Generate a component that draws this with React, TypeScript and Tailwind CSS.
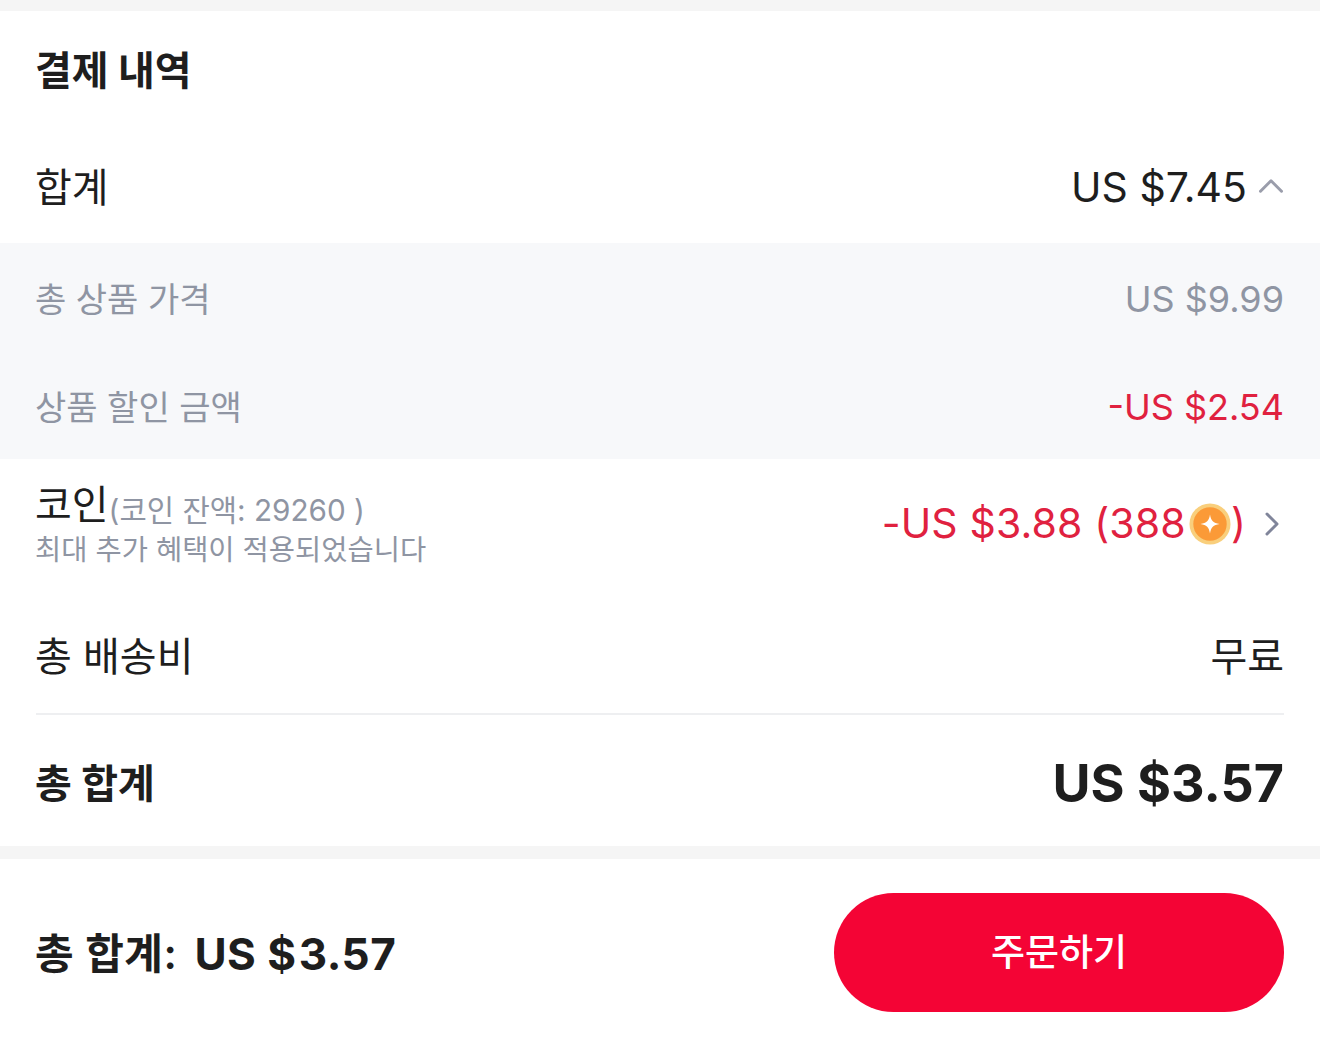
import { ChevronRight, ChevronUp } from "lucide-react";

const font = "font-['Inter','Noto_Sans_CJK_KR',sans-serif]";

function Coin() {
  return (
    <svg width="42" height="42" viewBox="0 0 44 44" className="ml-[3px] shrink-0">
      <circle cx="22" cy="22" r="21.500" fill="#f9cf7c" />
      <circle cx="22" cy="22" r="17.500" fill="#fb9a37" />
      <path d="M22 12c1 6.500 3.500 9 10 10-6.500 1-9 3.500-10 10-1-6.500-3.500-9-10-10 6.500-1 9-3.500 10-10z" fill="#fff" />
    </svg>
  );
}

function DetailRow({ label, value, red }: { label: string; value: string; red?: boolean }) {
  return (
    <div className="flex h-[108px] items-center justify-between px-9 pt-[4px] text-[36px] text-[#8f95a3]">
      <span className="-ml-px text-[34px]">{label}</span>
      <span className={red ? "text-[#e0213f]" : ""}>{value}</span>
    </div>
  );
}

export default function App() {
  return (
    <main className={`${font} flex h-[1049px] w-full flex-col overflow-hidden bg-[#f5f5f5] pt-[11px] text-[#1e1e1e]`}>
      <section className="h-[835px] bg-white">
        <h2 className="flex h-[118px] items-center px-9 pt-[2px] text-[40px] font-bold">
          <span className="-ml-px">결제 내역</span>
        </h2>

        <div className="flex h-[114px] items-center justify-between px-9 pt-[3px] text-[40px]">
          <span className="-ml-px">합계</span>
          <span className="flex items-center gap-[3px] text-[41px]">
            US $7.45
            <ChevronUp size={42} strokeWidth={1.7} className="-mr-[8px] -mt-[4px] text-[#9a9dab]" />
          </span>
        </div>

        <div className="bg-[#f7f8fa]">
          <DetailRow label="총 상품 가격" value="US $9.99" />
          <DetailRow label="상품 할인 금액" value="-US $2.54" red />
        </div>

        <div className="flex h-[132px] items-center justify-between px-9">
          <div className="-ml-px">
            <div className="flex h-[46px] items-center">
              <span className="text-[40px]">코인</span>
              <span className="mt-[10px] text-[29.700px] text-[#8f95a3]">(코인 잔액: 29260 )</span>
            </div>
            <div className="mt-[4px] text-[28.500px] leading-[36px] text-[#8f95a3]">최대 추가 혜택이 적용되었습니다</div>
          </div>
          <div className="-mt-[3px] flex items-center text-[41px] tracking-[0.15px] text-[#e0213f]">
            -US $3.88 (388
            <Coin />)
            <ChevronRight size={40} strokeWidth={1.8} className="-mr-[8px] ml-[6px] text-[#80859a]" />
          </div>
        </div>

        <div className="flex h-[122px] items-center justify-between px-9 pt-[10px] text-[40px]">
          <span className="-ml-px">총 배송비</span>
          <span>무료</span>
        </div>

        <div className="mx-9 flex h-[132px] items-center justify-between border-t-2 border-[#eeeff1] pt-[7px]">
          <span className="-ml-px text-[40px] font-bold">총 합계</span>
          <span className="text-[52px] font-bold">US $3.57</span>
        </div>
      </section>

      <footer className="mt-[13px] flex flex-1 items-center justify-between bg-white px-9 pb-[3px]">
        <span className="flex items-center gap-[17px] pt-[2px] font-semibold">
          <span className="-ml-px text-[42px] tracking-[0.5px]">총 합계:</span>
          <span className="text-[44px] font-bold tracking-[0.5px]">
            US $<span className="ml-[2px]">3.57</span>
          </span>
        </span>
        <button className="h-[119px] w-[450px] rounded-[60px] bg-[#f40435] text-[37px] font-medium text-white">
          주문하기
        </button>
      </footer>
    </main>
  );
}
